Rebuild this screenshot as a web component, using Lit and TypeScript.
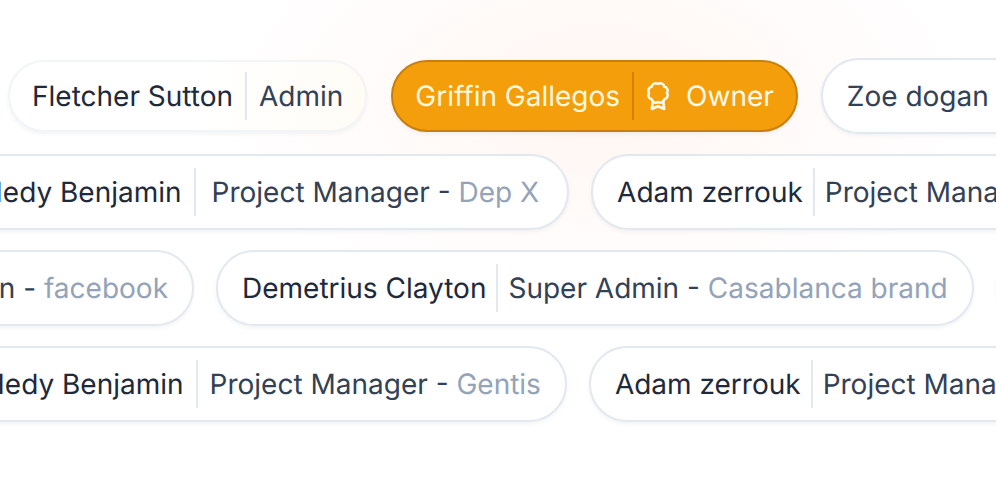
import { LitElement, html, css, svg, nothing } from "lit";
import { customElement, property } from "lit/decorators.js";
import { classMap } from "lit/directives/class-map.js";

interface Member {
  name: string;
  role: string;
  scope?: string;
  kind?: "soft" | "owner" | "muted" | "wide" | "dense";
}

const rows: { shift: string; members: Member[] }[] = [
  {
    shift: "first",
    members: [
      { name: "Fletcher Sutton", role: "Admin", kind: "soft" },
      { name: "Griffin Gallegos", role: "Owner", kind: "owner" },
      { name: "Zoe dogan", role: "Admin", kind: "muted" },
    ],
  },
  {
    shift: "second",
    members: [
      { name: "Hedy Benjamin", role: "Project Manager", scope: "Dep X", kind: "wide" },
      { name: "Adam zerrouk", role: "Project Manager", kind: "dense" },
    ],
  },
  {
    shift: "third",
    members: [
      { name: "Zoe dogan", role: "Admin", scope: "facebook" },
      {
        name: "Demetrius Clayton",
        role: "Super Admin",
        scope: "Casablanca brand",
        kind: "dense",
      },
      { name: "Hedy Benjamin", role: "Admin" },
    ],
  },
  {
    shift: "fourth",
    members: [
      { name: "Hedy Benjamin", role: "Project Manager", scope: "Gentis" },
      { name: "Adam zerrouk", role: "Project Manager", kind: "dense" },
    ],
  },
];

const award = svg`
  <path d="M21 12A4.2 4.2 0 0 1 18.36 18.36A4.2 4.2 0 0 1 12 21A4.2 4.2 0 0 1 5.64 18.36A4.2 4.2 0 0 1 3 12A4.2 4.2 0 0 1 5.64 5.64A4.2 4.2 0 0 1 12 3A4.2 4.2 0 0 1 18.36 5.64A4.2 4.2 0 0 1 21 12Z"/>
  <path d="M6.8 20L5.8 28L12 25.2L18.2 28L17.2 20"/>`;

@customElement("member-pill")
export class MemberPill extends LitElement {
  @property({ attribute: false }) member!: Member;

  static styles = css`
    :host {
      display: block;
      flex: none;
    }
    .pill {
      box-sizing: border-box;
      display: flex;
      align-items: center;
      gap: 12px;
      min-height: 76px;
      padding: 0 24px;
      border: 2px solid #e2e8f0;
      border-radius: 38px;
      background: #fff;
      box-shadow: 0 2px 4px rgb(15 23 42 / 5%);
      color: #334155;
      font: 400 28px/40px Inter, sans-serif;
      text-rendering: geometricPrecision;
      white-space: nowrap;
    }
    .name {
      color: #1e293b;
    }
    .divider {
      width: 2px;
      height: 48px;
      background: #e2e8f0;
    }
    .role {
      display: flex;
      align-items: center;
      gap: 16px;
    }
    .scope {
      color: #94a3b8;
    }
    .soft,
    .owner {
      min-height: 72px;
      margin: 0 1px;
      padding: 0 22px;
    }
    .soft {
      border-color: #f1f5f8;
      background: linear-gradient(90deg, #fff 50%, #fffcf6);
    }
    .owner {
      border-color: #c77f0f;
      background: #f59e0b;
      color: #fffbeb;
    }
    .owner .name {
      color: #fff9dc;
    }
    .owner .divider {
      background: #d97f06;
    }
    .muted .name {
      color: #334155;
    }
    .wide .role {
      padding: 0 4px;
    }
    .dense {
      gap: 10px;
    }
    .award {
      width: 24px;
      height: 30px;
      fill: none;
      stroke: currentColor;
      stroke-width: 2.6;
      stroke-linecap: round;
      stroke-linejoin: round;
    }
  `;

  render() {
    const { name, role, scope, kind } = this.member;
    return html`<div class=${classMap({ pill: true, [kind ?? "plain"]: true })}>
      <span class="name">${name}</span>
      <span class="divider"></span>
      <span class="role">
        ${kind === "owner"
          ? html`<svg class="award" viewBox="0 0 24 30" aria-hidden="true">${award}</svg>`
          : nothing}
        <span>${role}${scope ? html` - <span class="scope">${scope}</span>` : nothing}</span>
      </span>
    </div>`;
  }
}

@customElement("app-root")
export class AppRoot extends LitElement {
  static styles = css`
    :host {
      display: block;
      box-sizing: border-box;
      min-height: 100vh;
      padding: 58px 0;
      overflow: hidden;
      background: radial-gradient(
          ellipse 380px 220px at 60% 100px,
          #fff5f1,
          #fffaf8 45%,
          #fff
        )
        #fff;
    }
    .rows {
      display: flex;
      flex-direction: column;
      gap: 20px;
    }
    .row {
      display: flex;
      align-items: center;
      gap: 22px;
      min-height: 76px;
      margin: 0;
      padding: 0;
      list-style: none;
    }
    .item {
      flex: none;
    }
    .first {
      margin-left: 7px;
    }
    .second {
      margin-left: -44px;
    }
    .fourth {
      margin-left: -42px;
    }
    .third {
      margin-left: -263px;
    }
  `;

  render() {
    return html`<main class="rows">
      ${rows.map(
        ({ shift, members }) => html`<ul class="row ${shift}">
          ${members.map(
            (m) => html`<li class="item"><member-pill .member=${m}></member-pill></li>`
          )}
        </ul>`
      )}
    </main>`;
  }
}
